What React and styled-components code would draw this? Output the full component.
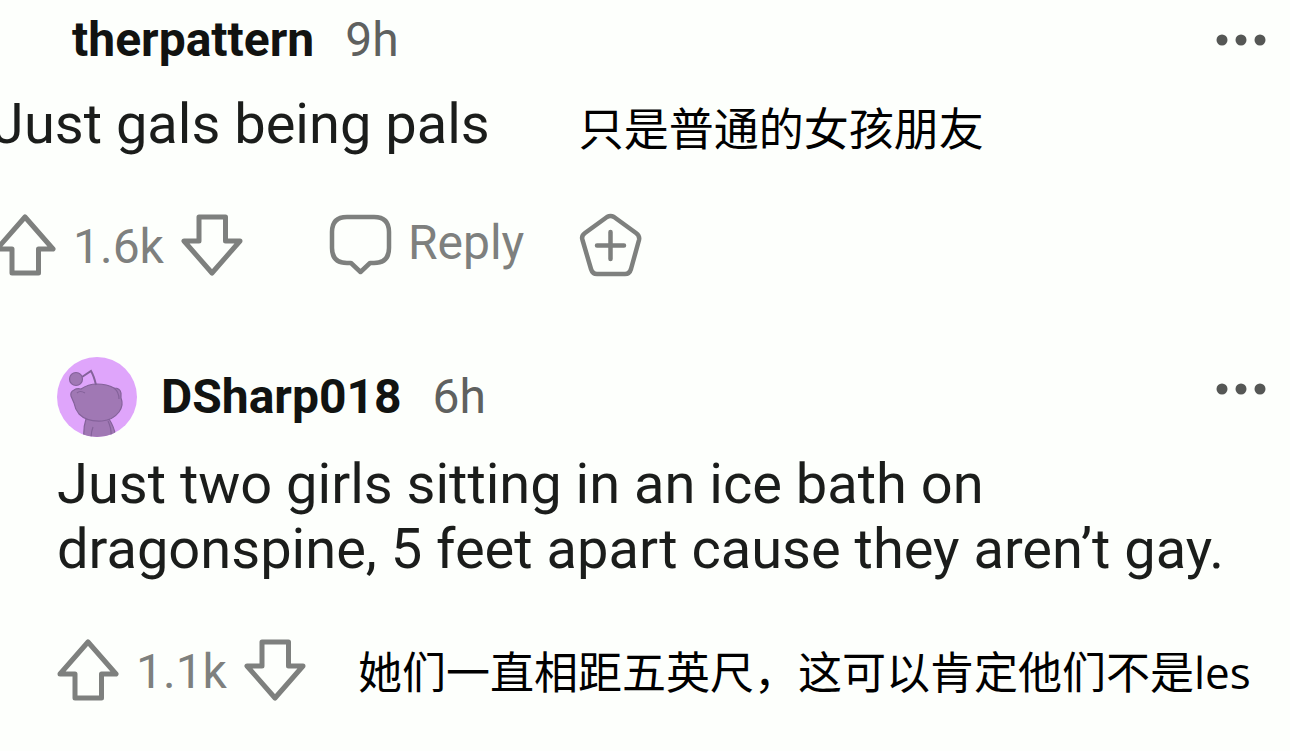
import React from 'react';
import styled, { createGlobalStyle } from 'styled-components';

const GlobalStyle = createGlobalStyle`
  body {
    margin: 0;
    background-color: #fdfffc;
    overflow-x: hidden;
  }
`;

const Thread = styled.main`
  display: flex;
  flex-direction: column;
  gap: 80px;
  overflow: hidden;
  font-family: Roboto, "Noto Sans CJK SC", sans-serif;
  color: #1b1d1b;
`;

const Comment = styled.article`
  padding-left: ${(props) => (props.$reply ? '57px' : '0')};
`;

const Header = styled.header`
  display: flex;
  align-items: center;
  height: 80px;
  padding-left: ${(props) => (props.$inset ? '72px' : '0')};
  padding-right: 24px;
  font-size: 48px;
  line-height: 56px;

  > svg {
    flex: none;
    margin-right: 24px;
  }
`;

const Author = styled.a`
  font-weight: 700;
  color: #111311;
  text-decoration: none;
`;

const Age = styled.time`
  margin-left: 31px;
  color: #5f615f;
`;

const MenuButton = styled.button`
  display: flex;
  margin-left: auto;
  padding: ${(props) => (props.$raised ? '0 0 16px' : '0')};
  border: 0;
  background: none;
  cursor: pointer;
`;

const BodyRow = styled.div`
  display: flex;
  align-items: center;
  padding-top: 12px;
  margin-left: -7px;
`;

const Body = styled.p`
  margin: 0;
  font-size: 56px;
  line-height: 65px;
`;

const ReplyBody = styled(Body)`
  padding: 15px 40px 0 0;
`;

const Translation = styled.p`
  margin: 0;
  padding-top: ${(props) => props.$drop};
  margin-left: ${(props) => props.$gap};
  font-family: "Open Sans", "Noto Sans CJK SC", sans-serif;
  font-size: ${(props) => (props.$large ? '45px' : '44px')};
  line-height: 56px;
  white-space: nowrap;
  color: #000;
`;

const Actions = styled.footer`
  display: flex;
  align-items: center;
  height: 64px;
  margin-top: 56px;
  margin-left: ${(props) => (props.$bleed ? '-6px' : '0')};
  font-size: 48px;
  line-height: 56px;
  color: #7e807e;
`;

const IconButton = styled.button`
  display: flex;
  align-items: center;
  flex: none;
  gap: 16px;
  padding: 0;
  border: 0;
  background: none;
  font: inherit;
  color: inherit;
  cursor: pointer;
`;

const ReplyButton = styled(IconButton)`
  margin: 0 55px 0 86px;

  > span {
    padding-bottom: 4px;
  }
`;

const Score = styled.span`
  margin: 0 17px;
  padding-top: 4px;
`;

const ArrowIcon = ({ down }) => (
  <svg width="62" height="64" viewBox="0 0 62 64" fill="none" stroke="currentColor" strokeWidth="5" strokeLinejoin="round" aria-hidden="true">
    {down ? (
      <path d="M18 4H44.500V28H59L31 60L3 28H18Z" />
    ) : (
      <path d="M31 4L59 36H44.500V60H18V36H3Z" />
    )}
  </svg>
);

const BubbleIcon = () => (
  <svg width="63" height="64" viewBox="0 0 63 64" fill="none" stroke="currentColor" strokeWidth="4.500" strokeLinejoin="round" aria-hidden="true">
    <path d="M18 4H45Q60 4 60 19V35Q60 50 45 50H41L31.500 59L22 50H18Q3 50 3 35V19Q3 4 18 4Z" />
  </svg>
);

const AwardIcon = () => (
  <svg width="63" height="64" viewBox="0 0 63 64" fill="none" stroke="currentColor" strokeWidth="4.500" strokeLinecap="round" strokeLinejoin="round" aria-hidden="true">
    <path d="M28 4Q31.500 2 35 4L57 20Q61 23 60 27L52 56Q50.500 61 46 61H18Q13.500 61 12 56L3.500 27Q2 23 6 20Z" />
    <path d="M31.500 19V46M18 32.500H45" />
  </svg>
);

const DotsIcon = () => (
  <svg width="50" height="12" viewBox="0 0 50 12" fill="#555755" aria-hidden="true">
    <circle cx="6" cy="6" r="5.500" />
    <circle cx="25" cy="6" r="5.500" />
    <circle cx="44" cy="6" r="5.500" />
  </svg>
);

const Avatar = () => (
  <svg width="80" height="80" viewBox="0 0 80 80" role="img" aria-label="DSharp018 avatar">
    <clipPath id="avatar-clip">
      <circle cx="40" cy="40" r="40" />
    </clipPath>
    <g clipPath="url(#avatar-clip)">
      <rect width="80" height="80" fill="#dfa5fb" />
      <g fill="#a078b4" stroke="#84629a" strokeWidth="1.200">
        <path d="M29 62Q26 71 27 82H59Q58 71 52 62Z" />
        <path d="M36 70Q34 75 34 82M51 64Q55 72 54 82" fill="none" />
        <path d="M14 39Q13 35 17 33Q20 31 24 32Q31 27 40 27Q50 27 57 31Q63 31 64 36L64 41Q67 48 62 55Q56 63 45 64Q30 65 22 57Q18 52 17 46Z" />
        <path d="M20 36Q23 33 28 36M57 31Q62 35 62 42" fill="none" />
        <path d="M25 20L34 14Q37 19 39 28" fill="none" strokeWidth="2" />
        <circle cx="19" cy="22" r="6.500" />
      </g>
    </g>
  </svg>
);

const Votes = ({ score }) => (
  <>
    <IconButton type="button" aria-label="Upvote">
      <ArrowIcon />
    </IconButton>
    <Score>{score}</Score>
    <IconButton type="button" aria-label="Downvote">
      <ArrowIcon down />
    </IconButton>
  </>
);

const App = () => {
  return (
    <>
      <GlobalStyle />
      <Thread>
        <Comment>
          <Header $inset>
            <Author href="#therpattern">therpattern</Author>
            <Age>9h</Age>
            <MenuButton type="button" aria-label="More options">
              <DotsIcon />
            </MenuButton>
          </Header>
          <BodyRow>
            <Body>Just gals being pals</Body>
            <Translation lang="zh-CN" $gap="89px" $drop="8px" $large>
              只是普通的女孩朋友
            </Translation>
          </BodyRow>
          <Actions $bleed>
            <Votes score="1.6k" />
            <ReplyButton type="button">
              <BubbleIcon />
              <span>Reply</span>
            </ReplyButton>
            <IconButton type="button" aria-label="Give award">
              <AwardIcon />
            </IconButton>
          </Actions>
        </Comment>

        <Comment $reply>
          <Header>
            <Avatar />
            <Author href="#DSharp018">DSharp018</Author>
            <Age>6h</Age>
            <MenuButton type="button" aria-label="More options" $raised>
              <DotsIcon />
            </MenuButton>
          </Header>
          <ReplyBody>
            Just two girls sitting in an ice bath on dragonspine, 5 feet apart cause they aren’t gay.
          </ReplyBody>
          <Actions>
            <Votes score="1.1k" />
            <Translation lang="zh-CN" $gap="52px" $drop="4px">
              她们一直相距五英尺，这可以肯定他们不是les
            </Translation>
          </Actions>
        </Comment>
      </Thread>
    </>
  );
};

export default App;
